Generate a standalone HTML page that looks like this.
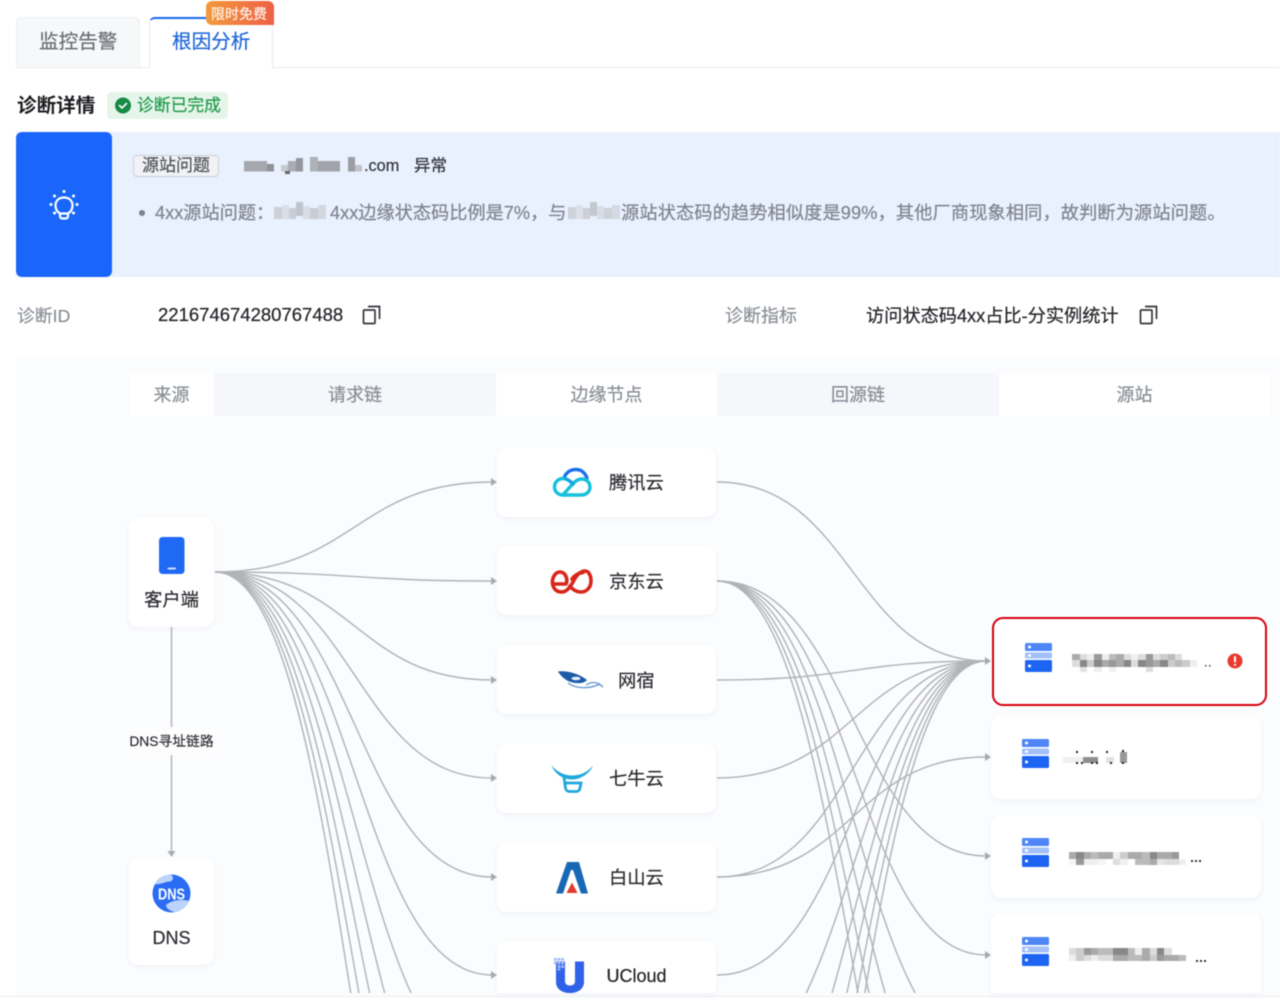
<!DOCTYPE html>
<html lang="zh">
<head>
<meta charset="utf-8">
<title>诊断详情</title>
<style>
html,body{margin:0;padding:0;background:#fff;width:1280px;height:1000px;overflow:hidden}
#w{position:relative;width:1280px;height:1000px;overflow:hidden;background:#fff;font-family:"Liberation Sans","Noto Sans CJK SC",sans-serif;filter:blur(.45px)}
#w div{position:absolute;box-sizing:border-box}
.t{white-space:nowrap;height:30px;line-height:30px;margin-top:1px;-webkit-text-stroke:.2px currentColor}
.n{margin-top:0}
.c{transform:translateX(-50%)}
.card{background:#fff;border-radius:10px;box-shadow:0 2px 6px rgba(30,50,90,.05)}
svg{position:absolute;left:0;top:0}
</style>
</head>
<body>
<div id="w">
<!-- tabs -->
<div style="left:16px;top:17px;width:124px;height:50px;background:#f7f8fa;border:1px solid #eceef1;border-bottom:0;border-radius:6px 6px 0 0"></div>
<div style="left:16px;top:66.500px;width:1264px;height:1.500px;background:#e9ebee"></div>
<div style="left:149px;top:17px;width:124px;height:51px;background:#fff;border:1px solid #e9ebee;border-top:2px solid #1a66ee;border-bottom:0;border-radius:6px 6px 0 0"></div>
<div style="left:206px;top:1px;width:68px;height:24px;background:linear-gradient(90deg,#f39a3c,#ee5f45);border-radius:6px 6px 0 6px"></div>
<div class="t" style="left:211px;top:-2px;font-size:14px;color:#fff;opacity:.9">限时免费</div>
<div class="t" style="left:39px;top:26px;font-size:19.600px;color:#6a6e75">监控告警</div>
<div class="t" style="left:172px;top:26px;font-size:19.600px;color:#1f66d8">根因分析</div>
<!-- heading -->
<div class="t" style="left:17px;top:90px;font-size:19.600px;font-weight:700;color:#1b1c1f;-webkit-text-stroke:0">诊断详情</div>
<div style="left:107px;top:92px;width:121px;height:27px;background:#e5f5ea;border-radius:4px"></div>
<div class="t" style="left:137px;top:90px;font-size:16.800px;color:#1f9a4a">诊断已完成</div>
<!-- banner -->
<div style="left:16px;top:132px;width:1264px;height:145px;background:#e9f0fe"></div>
<div style="left:16px;top:132px;width:96px;height:145px;background:#1a66fa;border-radius:6px"></div>
<div style="left:133px;top:155px;width:86px;height:22px;background:#f1f2f5;border:1px solid #cdd0d5;border-radius:4px"></div>
<div class="t" style="left:142px;top:150px;font-size:17px;color:#4f5257">源站问题</div>
<div class="t" style="left:364px;top:150px;font-size:16.300px;color:#33363b">.com</div>
<div class="t" style="left:414px;top:150px;font-size:16.500px;color:#33363b">异常</div>
<div style="left:139px;top:210px;width:6px;height:6px;border-radius:50%;background:#7d828b"></div>
<div class="t" style="left:155px;top:197px;font-size:18.200px;color:#7f848d">4xx源站问题：</div>
<div class="t" style="left:330px;top:197px;font-size:18.200px;color:#7f848d">4xx边缘状态码比例是7%，与</div>
<div class="t" style="left:621px;top:197px;font-size:18.200px;color:#7f848d;letter-spacing:.13px">源站状态码的趋势相似度是99%，其他厂商现象相同，故判断为源站问题。</div>
<!-- meta -->
<div class="t" style="left:17px;top:300px;font-size:17.800px;color:#8b9098">诊断ID</div>
<div class="t n" style="left:158px;top:300px;font-size:18.500px;color:#222428">221674674280767488</div>
<div class="t" style="left:725px;top:300px;font-size:18px;color:#8b9098">诊断指标</div>
<div class="t" style="left:866px;top:300px;font-size:18.200px;color:#222428">访问状态码4xx占比-分实例统计</div>
<!-- flow panel -->
<div style="left:16px;top:358px;width:1264px;height:638px;background:#fbfcfe"></div>
<div style="left:0;top:996px;width:1280px;height:1px;background:#eceef0"></div>
<div style="left:129px;top:373px;width:85px;height:43px;background:#fff"></div>
<div style="left:214px;top:373px;width:282px;height:43px;background:#f5f7fb"></div>
<div style="left:496px;top:373px;width:221px;height:43px;background:#fff"></div>
<div style="left:717px;top:373px;width:282px;height:43px;background:#f5f7fb"></div>
<div style="left:999px;top:373px;width:271px;height:43px;background:#fff"></div>
<div class="t c" style="left:171.500px;top:379px;font-size:18px;color:#898e96">来源</div>
<div class="t c" style="left:355px;top:379px;font-size:18px;color:#898e96">请求链</div>
<div class="t c" style="left:606.500px;top:379px;font-size:18px;color:#898e96">边缘节点</div>
<div class="t c" style="left:858px;top:379px;font-size:18px;color:#898e96">回源链</div>
<div class="t c" style="left:1134.500px;top:379px;font-size:18px;color:#898e96">源站</div>

<!-- cards -->
<div class="card" style="left:129px;top:518px;width:85px;height:109px"></div>
<div class="card" style="left:129px;top:857px;width:85px;height:108px"></div>
<div class="card" style="left:497px;top:448px;width:219px;height:69px"></div>
<div class="card" style="left:497px;top:546px;width:219px;height:69px"></div>
<div class="card" style="left:497px;top:645px;width:219px;height:69px"></div>
<div class="card" style="left:497px;top:744px;width:219px;height:69px"></div>
<div class="card" style="left:497px;top:843px;width:219px;height:69px"></div>
<div class="card" style="left:497px;top:941px;width:219px;height:52px;border-radius:10px 10px 0 0"></div>
<div class="card" style="left:991px;top:716px;width:270px;height:83px"></div>
<div class="card" style="left:991px;top:815px;width:270px;height:83px"></div>
<div class="card" style="left:991px;top:913px;width:270px;height:80px;border-radius:10px 10px 0 0"></div>
<div style="left:991.500px;top:617px;width:275px;height:89px;background:#fff;border:2.800px solid #d6000e;border-radius:11px"></div>

<div class="t c" style="left:171.500px;top:584px;font-size:18.300px;color:#2a2c30">客户端</div>
<div class="t c n" style="left:171.500px;top:923px;font-size:18px;color:#2a2c30">DNS</div>
<div class="t" style="left:609px;top:467px;font-size:18.300px;color:#2a2c30">腾讯云</div>
<div class="t" style="left:609px;top:566px;font-size:18.300px;color:#2a2c30">京东云</div>
<div class="t" style="left:618px;top:665px;font-size:18.300px;color:#2a2c30">网宿</div>
<div class="t" style="left:609px;top:763px;font-size:18.300px;color:#2a2c30">七牛云</div>
<div class="t" style="left:609px;top:862px;font-size:18.300px;color:#2a2c30">白山云</div>
<div class="t n" style="left:606.500px;top:961px;font-size:18px;color:#1f2125">UCloud</div>

<svg width="1280" height="1000" viewBox="0 0 1280 1000" xmlns="http://www.w3.org/2000/svg">
<g fill="none" stroke="#b2b3b8" stroke-width="1.450">
<!-- client to edge -->
<path d="M215 572C355 572 355 482 492 482"/>
<path d="M215 572C355 572 355 581 492 581"/>
<path d="M215 572C355 572 355 680 492 680"/>
<path d="M215 572C355 572 355 778 492 778"/>
<path d="M215 572C355 572 355 877 492 877"/>
<path d="M215 572C355 572 355 975 492 975"/>
<path d="M215 572C319.300 572 345.900 850.600 411 993"/>
<path d="M215 572C304.200 572 336.600 815.900 384.700 993"/>
<path d="M215 572C294.500 572 328.800 797.800 369.600 993"/>
<path d="M215 572C287.500 572 322.400 786.400 358.900 993"/>
<path d="M215 572C282.100 572 317 778 350.700 993"/>
<!-- edge to origin -->
<path d="M717 482C853 482 853 661 986 661"/>
<path d="M717 680C853 680 853 661 986 661"/>
<path d="M717 778C853 778 853 661 986 661"/>
<path d="M717 877C853 877 853 661 986 661"/>
<path d="M717 877C853 877 853 757 986 757"/>
<path d="M717 975C853 975 853 661 986 661"/>
<path d="M986 661C890.800 661 863.700 872.700 806.200 993"/>
<path d="M986 661C906.200 661 874.300 845.300 832.100 993"/>
<path d="M986 661C915.600 661 882.500 832 846.800 993"/>
<path d="M986 661C922.400 661 889.300 823.200 857 993"/>
<path d="M986 661C927.500 661 894.700 817.600 864.800 993"/>
<path d="M717 581C853 581 853 856 986 856"/>
<path d="M717 581C853 581 853 955 986 955"/>
<path d="M717 581C822.400 581 846.100 865.100 915.200 993"/>
<path d="M717 581C805.600 581 836.500 823.800 885.100 993"/>
<path d="M717 581C795.500 581 828.600 804.400 869 993"/>
<path d="M717 581C788.200 581 822.100 792 858 993"/>
<path d="M171.500 627V852"/>
</g>
<!-- arrows -->
<g fill="#a9aaaf">
<path d="M491 478L497 482L491 486Z"/><path d="M491 577L497 581L491 585Z"/><path d="M491 676L497 680L491 684Z"/><path d="M491 774L497 778L491 782Z"/><path d="M491 873L497 877L491 881Z"/><path d="M491 971L497 975L491 979Z"/>
<path d="M985 657L991 661L985 665Z"/><path d="M985 753L991 757L985 761Z"/><path d="M985 852L991 856L985 860Z"/><path d="M985 951L991 955L985 959Z"/>
<path d="M167.500 851L175.500 851L171.500 857Z"/>
</g>
<!-- DNS label background -->
<rect x="128" y="727" width="88" height="28" fill="#fdfdfe"/>
<text x="171.500" y="746" text-anchor="middle" font-size="13.800" fill="#2a2c30" stroke="#2a2c30" stroke-width=".15" font-family="Liberation Sans, Noto Sans CJK SC, sans-serif">DNS寻址链路</text>

<!-- check icon -->
<circle cx="123" cy="105.500" r="8" fill="#178a45"/>
<path d="M119.500 105.500l2.500 2.500l4.500-4.500" fill="none" stroke="#fff" stroke-width="1.600" stroke-linecap="round" stroke-linejoin="round"/>
<!-- bulb -->
<g fill="none" stroke="#fff" stroke-width="2.200" stroke-linecap="round" stroke-linejoin="round">
<path d="M60 213.500C56.500 211.500 55.500 208.500 55.500 205.500C55.500 200.500 59 197.500 64 197.500C69 197.500 72.500 200.500 72.500 205.500C72.500 208.500 71.500 211.500 68 213.500V216C68 217.500 67 218.500 65.500 218.500H62.500C61 218.500 60 217.500 60 216Z"/>
<path d="M60.500 213.500H67.500"/>
</g>
<g fill="#fff">
<circle cx="64" cy="191.500" r="1.500"/><circle cx="54.500" cy="196" r="1.500"/><circle cx="73.500" cy="196" r="1.500"/><circle cx="51" cy="204.500" r="1.500"/><circle cx="77" cy="204.500" r="1.500"/><circle cx="54.500" cy="213" r="1.500"/><circle cx="73.500" cy="213" r="1.500"/>
</g>
<!-- copy icons -->
<g fill="none" stroke="#33363b" stroke-width="1.700">
<rect x="363.500" y="310" width="11.500" height="13.500" rx="1"/>
<path d="M368 306.500H379.500V319"/>
<rect x="1140.500" y="310" width="11.500" height="13.500" rx="1"/>
<path d="M1145 306.500H1156.500V319"/>
</g>
<!-- client icon -->
<rect x="159" y="537" width="25.500" height="37" rx="3.500" fill="#1f69f5"/>
<rect x="167.500" y="567.500" width="8.500" height="2" rx="1" fill="#cfe0ff"/>
<!-- DNS icon -->
<circle cx="171.500" cy="893.500" r="19" fill="#2a6df4"/>
<path d="M155 884C157 878 163 875 170 874.500C174 876 174 880 170 881.500C165 881.500 160 885 155 884Z" fill="#bcd3fb"/>
<path d="M166 905C172 900 182 899 189 901C187 906 182 910 176 912C172 912 166 909 166 905Z" fill="#bcd3fb"/>
<text x="171.500" y="899.500" text-anchor="middle" font-size="16" font-weight="700" fill="#fff" textLength="27" lengthAdjust="spacingAndGlyphs" font-family="Liberation Sans, sans-serif">DNS</text>
<!-- Tencent -->
<g fill="none" stroke-width="3.400" stroke-linecap="round">
<path d="M564 478C566 472 571 469.500 576 469.500C581 469.500 585 472.500 587 478" stroke="#1b70ea"/>
<path d="M566 479C559 477 554.500 482 554.500 487C554.500 492 558.500 495 563 495H581C586.500 495 590 491.500 590 487C590 482.500 586.500 479 582 479C576 479 573 484 569 488C566 491.500 564 494 562 495" stroke="#16c0dc"/>
<path d="M566 479C569 480 571 482 573 484" stroke="#16a5e0"/>
</g>
<!-- JD -->
<g fill="none" stroke="#d8261b" stroke-width="3.600" stroke-linecap="round" stroke-linejoin="round">
<path d="M553 584H566C568 580 566 572 560 572C555 572 552 578 552.500 583C553 589 557 592 561.500 592C567 592 570 587 573 582C576 576 580 571 585 571C589 571 591 576 591 581C591 587 587 592 581 592C576 592 572 589 570 586"/>
<path d="M572 579C574 576 578 573 583 572.500"/>
</g>
<!-- Wangsu -->
<rect x="557" y="669" width="47" height="21" fill="#fff"/>
<path d="M558 671.500C566 670.500 578 673 587 680C584 684 575 684 568 681C564 679 560 675 558 671.500Z" fill="#1d5aa8"/>
<ellipse cx="576" cy="678.500" rx="4.500" ry="1.700" fill="#e8f0fa"/>
<path d="M568 683C576 689 590 689 600 684M586 685C592 681 598 682 603 687" fill="none" stroke="#5f93cb" stroke-width="1.300"/>
<!-- Qiniu -->
<path d="M551.500 765.500C558 773 566 775.500 572 775.500C579 775.500 587 773 593 765.500C590 773 581 779.500 572 779.500C563 779.500 555 774 551.500 765.500Z" fill="#1fa8dc"/>
<path d="M564 777L565.500 788C566 790.500 567 791.500 570 791.500H576C578.500 791.500 579.500 790.500 580 788L581 783H565" fill="none" stroke="#1fa8dc" stroke-width="2.800"/>
<!-- Baishan -->
<path d="M556 893.500L567 862H579L588 893.500H581L573 870H571L563 893.500Z" fill="#1768b5"/>
<path d="M572 882.500L577.500 893H566.500Z" fill="#e23a2e"/>
<!-- UCloud -->
<path d="M556 961.500H565V981C565 984 567 985.500 570 985.500C573 985.500 575 984 575 981V961.500H584V982C584 989 578 993 570 993C562 993 556 989 556 982Z" fill="#2f62e8"/>
<g fill="#a8bcf5">
<rect x="554" y="958" width="2.800" height="2.800"/><rect x="557.600" y="958" width="2.800" height="2.800"/><rect x="561.200" y="958" width="2.800" height="2.800"/><rect x="554" y="961.600" width="2.800" height="2.800"/><rect x="557.600" y="961.600" width="2.800" height="2.800"/><rect x="561.200" y="961.600" width="2.800" height="2.800"/><rect x="557.600" y="965.200" width="2.800" height="2.800"/><rect x="561.200" y="965.200" width="2.800" height="2.800"/><rect x="557.600" y="968.600" width="2.800" height="1.800"/>
</g>
<!-- server icons -->
<g>
<rect x="1025" y="643" width="27" height="8" rx="1.500" fill="#4f86f7"/><rect x="1025" y="652.500" width="27" height="6" rx="1.500" fill="#a3c0fb"/><rect x="1025" y="660" width="27" height="12" rx="1.500" fill="#1d64f2"/>
<circle cx="1029.500" cy="647" r="1.500" fill="#fff"/><circle cx="1029.500" cy="655.500" r="1.500" fill="#fff"/><circle cx="1029.500" cy="666" r="1.500" fill="#fff"/>
</g>
<g>
<rect x="1022" y="739" width="27" height="8" rx="1.500" fill="#4f86f7"/><rect x="1022" y="748.500" width="27" height="6" rx="1.500" fill="#a3c0fb"/><rect x="1022" y="756" width="27" height="12" rx="1.500" fill="#1d64f2"/>
<circle cx="1026.500" cy="743" r="1.500" fill="#fff"/><circle cx="1026.500" cy="751.500" r="1.500" fill="#fff"/><circle cx="1026.500" cy="762" r="1.500" fill="#fff"/>
</g>
<g>
<rect x="1022" y="838" width="27" height="8" rx="1.500" fill="#4f86f7"/><rect x="1022" y="847.500" width="27" height="6" rx="1.500" fill="#a3c0fb"/><rect x="1022" y="855" width="27" height="12" rx="1.500" fill="#1d64f2"/>
<circle cx="1026.500" cy="842" r="1.500" fill="#fff"/><circle cx="1026.500" cy="850.500" r="1.500" fill="#fff"/><circle cx="1026.500" cy="861" r="1.500" fill="#fff"/>
</g>
<g>
<rect x="1022" y="937" width="27" height="8" rx="1.500" fill="#4f86f7"/><rect x="1022" y="946.500" width="27" height="6" rx="1.500" fill="#a3c0fb"/><rect x="1022" y="954" width="27" height="12" rx="1.500" fill="#1d64f2"/>
<circle cx="1026.500" cy="941" r="1.500" fill="#fff"/><circle cx="1026.500" cy="949.500" r="1.500" fill="#fff"/><circle cx="1026.500" cy="960" r="1.500" fill="#fff"/>
</g>
<!-- alert icon -->
<circle cx="1235" cy="661" r="7.500" fill="#e8392f"/>
<rect x="1234" y="656" width="2" height="6.500" rx="1" fill="#fff"/><circle cx="1235" cy="664.800" r="1.100" fill="#fff"/>

<!-- pixelated (masked) text -->
<!-- banner domain -->
<g>
<rect x="244" y="161" width="23" height="10.500" fill="#a6a8ad"/><rect x="267" y="164" width="7" height="7.500" fill="#8f9298"/>
<rect x="281" y="165" width="7" height="6.500" fill="#c7cad0"/><rect x="288" y="161" width="8" height="10.500" fill="#a9acb2"/><rect x="296" y="158" width="7" height="13.500" fill="#94979d"/>
<rect x="285" y="171" width="5" height="3" fill="#666"/>
<rect x="310" y="157" width="8" height="14.500" fill="#aeb1b7"/><rect x="318" y="161" width="22" height="10.500" fill="#a1a4aa"/>
<rect x="348" y="157" width="7" height="14.500" fill="#9a9da3"/><rect x="355" y="165" width="7" height="6.500" fill="#bfc2c8"/>
</g>
<g>
<rect x="274" y="207" width="8" height="12" fill="#ccd0d8"/><rect x="282" y="205" width="7" height="14" fill="#dbdee6"/><rect x="289" y="208" width="7" height="11" fill="#c9cdd5"/><rect x="296" y="202" width="7" height="14" fill="#c0c4cc"/><rect x="303" y="206" width="7" height="13" fill="#d8dce4"/><rect x="310" y="208" width="8" height="11" fill="#c9cdd5"/><rect x="318" y="205" width="8" height="14" fill="#d3d7df"/>
<rect x="568" y="207" width="8" height="12" fill="#ced2da"/><rect x="576" y="205" width="7" height="14" fill="#dde0e8"/><rect x="583" y="208" width="7" height="11" fill="#ccd0d8"/><rect x="590" y="202" width="7" height="14" fill="#c3c7cf"/><rect x="597" y="206" width="7" height="13" fill="#d8dce4"/><rect x="604" y="208" width="8" height="11" fill="#ccd0d8"/><rect x="612" y="205" width="8" height="14" fill="#d5d9e1"/>
</g>
<!-- row 1 -->
<g shape-rendering="crispEdges">
<rect x="1072" y="654" width="8" height="6" fill="#aaa"/><rect x="1080" y="654" width="7" height="6" fill="#ddd"/><rect x="1087" y="654" width="7" height="6" fill="#eee"/><rect x="1094" y="654" width="8" height="6" fill="#999"/><rect x="1102" y="654" width="7" height="6" fill="#eee"/><rect x="1109" y="654" width="7" height="6" fill="#bbb"/><rect x="1116" y="654" width="8" height="6" fill="#aaa"/><rect x="1124" y="654" width="7" height="6" fill="#ddd"/><rect x="1131" y="654" width="7" height="6" fill="#f0f0f0"/><rect x="1138" y="654" width="8" height="6" fill="#ddd"/><rect x="1146" y="654" width="7" height="6" fill="#999"/><rect x="1153" y="654" width="7" height="6" fill="#ddd"/><rect x="1160" y="654" width="8" height="6" fill="#ccc"/><rect x="1168" y="654" width="7" height="6" fill="#bbb"/><rect x="1175" y="654" width="7" height="6" fill="#ddd"/>
<rect x="1072" y="660" width="8" height="7" fill="#ddd"/><rect x="1080" y="660" width="7" height="7" fill="#888"/><rect x="1087" y="660" width="7" height="7" fill="#ccc"/><rect x="1094" y="660" width="8" height="7" fill="#888"/><rect x="1102" y="660" width="7" height="7" fill="#aaa"/><rect x="1109" y="660" width="7" height="7" fill="#999"/><rect x="1116" y="660" width="8" height="7" fill="#aaa"/><rect x="1124" y="660" width="7" height="7" fill="#888"/><rect x="1131" y="660" width="7" height="7" fill="#ddd"/><rect x="1138" y="660" width="8" height="7" fill="#888"/><rect x="1146" y="660" width="7" height="7" fill="#999"/><rect x="1153" y="660" width="7" height="7" fill="#aaa"/><rect x="1160" y="660" width="8" height="7" fill="#888"/><rect x="1168" y="660" width="7" height="7" fill="#ccc"/><rect x="1175" y="660" width="7" height="7" fill="#bbb"/><rect x="1182" y="660" width="8" height="7" fill="#ccc"/><rect x="1190" y="660" width="7" height="7" fill="#eee"/>
<rect x="1080" y="667" width="7" height="5" fill="#e2e2e2"/><rect x="1094" y="667" width="8" height="5" fill="#eee"/><rect x="1109" y="667" width="7" height="5" fill="#f0f0f0"/><rect x="1146" y="667" width="7" height="5" fill="#ddd"/>
<rect x="1205" y="665" width="1.500" height="1.500" fill="#444"/><rect x="1209" y="665" width="1.500" height="1.500" fill="#444"/>
</g>
<!-- row 2 -->
<g shape-rendering="crispEdges">
<rect x="1063" y="757" width="22" height="6" fill="#f0f0f0"/><rect x="1085" y="757" width="7" height="6" fill="#ddd"/><rect x="1083" y="757" width="15" height="6" fill="#8f8f8f"/><rect x="1106" y="757" width="8" height="6" fill="#e2e2e2"/><rect x="1120" y="752" width="7" height="11" fill="#999"/>
<g fill="#222"><rect x="1076" y="751" width="2" height="2"/><rect x="1091" y="751" width="2" height="2"/><rect x="1106" y="751" width="2" height="2"/><rect x="1122" y="750" width="2" height="2"/><rect x="1076" y="762" width="2" height="2"/><rect x="1081" y="762" width="2" height="2"/><rect x="1091" y="762" width="2" height="2"/><rect x="1096" y="762" width="2" height="2"/><rect x="1110" y="762" width="2" height="2"/><rect x="1122" y="762" width="2" height="2"/></g>
</g>
<!-- row 3 -->
<g shape-rendering="crispEdges">
<rect x="1069" y="852" width="7" height="7" fill="#aaa"/><rect x="1076" y="852" width="8" height="7" fill="#888"/><rect x="1084" y="852" width="7" height="7" fill="#aaa"/><rect x="1091" y="852" width="7" height="7" fill="#bbb"/><rect x="1098" y="852" width="8" height="7" fill="#aaa"/><rect x="1106" y="852" width="7" height="7" fill="#aaa"/><rect x="1113" y="852" width="7" height="7" fill="#eee"/><rect x="1120" y="852" width="8" height="7" fill="#ccc"/><rect x="1128" y="852" width="7" height="7" fill="#aaa"/><rect x="1135" y="852" width="7" height="7" fill="#aaa"/><rect x="1142" y="852" width="8" height="7" fill="#bbb"/><rect x="1150" y="852" width="7" height="7" fill="#888"/><rect x="1157" y="852" width="7" height="7" fill="#aaa"/><rect x="1164" y="852" width="8" height="7" fill="#aaa"/><rect x="1172" y="852" width="7" height="7" fill="#999"/>
<rect x="1069" y="859" width="7" height="6" fill="#f5f5f5"/><rect x="1076" y="859" width="8" height="6" fill="#999"/><rect x="1084" y="859" width="14" height="6" fill="#eee"/><rect x="1098" y="859" width="8" height="6" fill="#f5f5f5"/><rect x="1113" y="859" width="7" height="6" fill="#ddd"/><rect x="1120" y="859" width="8" height="6" fill="#f0f0f0"/><rect x="1135" y="859" width="15" height="6" fill="#bbb"/><rect x="1150" y="859" width="7" height="6" fill="#aaa"/><rect x="1157" y="859" width="7" height="6" fill="#e5e5e5"/><rect x="1164" y="859" width="15" height="6" fill="#ddd"/><rect x="1179" y="859" width="7" height="6" fill="#eee"/>
<g fill="#333"><rect x="1191" y="860" width="2" height="2"/><rect x="1195" y="860" width="2" height="2"/><rect x="1199" y="860" width="2" height="2"/></g>
</g>
<!-- row 4 -->
<g shape-rendering="crispEdges">
<rect x="1069" y="948" width="7" height="7" fill="#ddd"/><rect x="1076" y="948" width="8" height="7" fill="#ccc"/><rect x="1084" y="948" width="7" height="7" fill="#999"/><rect x="1091" y="948" width="7" height="7" fill="#aaa"/><rect x="1098" y="948" width="8" height="7" fill="#bbb"/><rect x="1106" y="948" width="7" height="7" fill="#bbb"/><rect x="1113" y="948" width="7" height="7" fill="#888"/><rect x="1120" y="948" width="8" height="7" fill="#888"/><rect x="1128" y="948" width="7" height="7" fill="#bbb"/><rect x="1135" y="948" width="7" height="7" fill="#eee"/><rect x="1142" y="948" width="8" height="7" fill="#aaa"/><rect x="1150" y="948" width="7" height="7" fill="#ddd"/><rect x="1157" y="948" width="7" height="7" fill="#888"/><rect x="1164" y="948" width="8" height="7" fill="#ddd"/>
<rect x="1069" y="955" width="7" height="6" fill="#eee"/><rect x="1076" y="955" width="8" height="6" fill="#ccc"/><rect x="1084" y="955" width="7" height="6" fill="#ddd"/><rect x="1091" y="955" width="7" height="6" fill="#eee"/><rect x="1098" y="955" width="8" height="6" fill="#ddd"/><rect x="1106" y="955" width="7" height="6" fill="#ddd"/><rect x="1113" y="955" width="7" height="6" fill="#aaa"/><rect x="1120" y="955" width="8" height="6" fill="#aaa"/><rect x="1128" y="955" width="7" height="6" fill="#bbb"/><rect x="1135" y="955" width="7" height="6" fill="#bbb"/><rect x="1142" y="955" width="8" height="6" fill="#aaa"/><rect x="1150" y="955" width="7" height="6" fill="#ccc"/><rect x="1157" y="955" width="7" height="6" fill="#999"/><rect x="1164" y="955" width="8" height="6" fill="#aaa"/><rect x="1172" y="955" width="7" height="6" fill="#aaa"/><rect x="1179" y="955" width="7" height="6" fill="#bbb"/>
<g fill="#333"><rect x="1196" y="960" width="2" height="2"/><rect x="1200" y="960" width="2" height="2"/><rect x="1204" y="960" width="2" height="2"/></g>
</g>
</svg>
</div>
</body>
</html>
